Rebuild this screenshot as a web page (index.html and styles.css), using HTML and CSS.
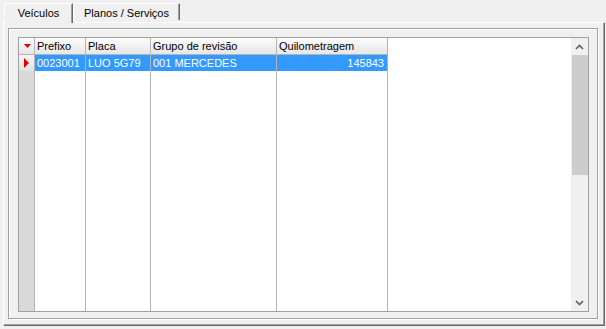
FILE: index.html
```html
<!DOCTYPE html>
<html lang="pt">
<head>
<meta charset="utf-8">
<title>Veículos</title>
<link rel="stylesheet" href="styles.css">
</head>
<body>
<div class="window">
  <div class="tabs">
    <div class="tab active">Veículos</div>
    <div class="tab">Planos / Serviços</div>
  </div>
  <div class="page">
    <div class="frame">
      <div class="grid">
        <div class="table">
          <div class="hcell ind"><svg class="tri-down" width="7" height="4" viewBox="0 0 7 4"><polygon points="0,0 7,0 3.5,4" fill="#e00000"/></svg></div>
          <div class="hcell">Prefixo</div>
          <div class="hcell">Placa</div>
          <div class="hcell">Grupo de revisão</div>
          <div class="hcell">Quilometragem</div>
          <div class="blank"></div>

          <div class="rcell ind"><svg class="tri-right" width="5" height="10" viewBox="0 0 5 10"><polygon points="0,0 5,5 0,10" fill="#e00000"/></svg></div>
          <div class="rcell sel">0023001</div>
          <div class="rcell sel">LUO 5G79</div>
          <div class="rcell sel">001 MERCEDES</div>
          <div class="rcell sel num">145843</div>
          <div class="blank"></div>

          <div class="fcell ind"></div>
          <div class="fcell"></div>
          <div class="fcell"></div>
          <div class="fcell"></div>
          <div class="fcell"></div>
          <div class="blank"></div>
        </div>
        <div class="vscroll">
          <div class="sbtn"><svg width="9" height="6" viewBox="0 0 9 6"><polyline points="1,5 4.5,1.5 8,5" fill="none" stroke="#606060" stroke-width="1.6"/></svg></div>
          <div class="track"><div class="thumb"></div></div>
          <div class="sbtn"><svg width="9" height="6" viewBox="0 0 9 6"><polyline points="1,1 4.5,4.5 8,1" fill="none" stroke="#606060" stroke-width="1.6"/></svg></div>
        </div>
      </div>
    </div>
  </div>
</div>
</body>
</html>
```

FILE: styles.css
```css
html, body {
  margin: 0;
  padding: 0;
  background: #f0f0f0;
}
body {
  font-family: "Liberation Sans", Arial, sans-serif;
  font-size: 11px;
  color: #000;
  width: 606px;
  height: 329px;
  overflow: hidden;
}
.window {
  padding: 3px 0 0 3px;
}
.tabs {
  display: flex;
  align-items: flex-end;
  height: 19px;
  margin-left: 1px;
  position: relative;
  z-index: 1;
}
.tab {
  box-sizing: border-box;
  background: #f0f0f0;
  border-top: 1px solid #fff;
  border-left: 1px solid #fff;
  border-right: 1px solid #696969;
  box-shadow: inset -1px 0 0 #a0a0a0;
  text-align: center;
  line-height: 13px;
  width: 107px;
  height: 17px;
  padding-top: 3px;
  margin-bottom: 2px;
}
.tab.active {
  width: 69px;
  height: 20px;
  padding-top: 3px;
  margin-bottom: -1px;
}
.page {
  box-sizing: border-box;
  width: 602px;
  height: 304px;
  border-top: 1px solid #fff;
  border-left: 1px solid #fff;
  border-right: 1px solid #696969;
  border-bottom: 1px solid #696969;
  box-shadow: inset -1px -1px 0 #a0a0a0;
  padding: 5px 0 0 4px;
}
.frame {
  box-sizing: border-box;
  width: 590px;
  height: 291px;
  border: 1px solid #a0a0a0;
  box-shadow: 1px 1px 0 #fff, inset 1px 1px 0 #fff;
  padding: 8px 0 0 9px;
}
.grid {
  box-sizing: border-box;
  width: 571px;
  height: 275px;
  border: 1px solid #a0a0a0;
  background: #fff;
  display: flex;
}
.table {
  flex: 1;
  display: grid;
  grid-template-columns: 16px 51px 65px 126px 111px 1fr;
  grid-template-rows: 17px 16px 1fr;
}
.hcell, .rcell, .fcell {
  box-sizing: border-box;
  border-right: 1px solid #b4b4b4;
  white-space: nowrap;
  overflow: hidden;
}
.hcell {
  background: linear-gradient(#fdfdfd, #e6e6e6);
  border-bottom: 1px solid #b4b4b4;
  line-height: 16px;
  padding-left: 2px;
}
.rcell {
  line-height: 16px;
  padding-left: 2px;
}
.rcell.sel {
  background: #3399ff;
  color: #fff;
}
.rcell.num {
  text-align: right;
  padding-right: 3px;
}
.ind {
  padding: 0;
  display: flex;
  align-items: center;
  background: #dcdcdc;
}
.hcell.ind {
  background: linear-gradient(#fdfdfd, #e6e6e6);
  justify-content: center;
  padding-left: 1px;
}
.rcell.ind {
  background: linear-gradient(#f4f4f4, #e2e2e2);
  padding-left: 5px;
}
.fcell.ind {
  background: #d9d9d9;
}
.tri-down, .tri-right {
  display: block;
}
.blank {
  background: #fff;
}
.vscroll {
  width: 17px;
  background: #f0f0f0;
  display: flex;
  flex-direction: column;
}
.sbtn {
  height: 17px;
  display: flex;
  align-items: center;
  justify-content: center;
}
.track {
  flex: 1;
}
.thumb {
  height: 120px;
  margin: 0 0 0 1px;
  background: #cdcdcd;
}
```
